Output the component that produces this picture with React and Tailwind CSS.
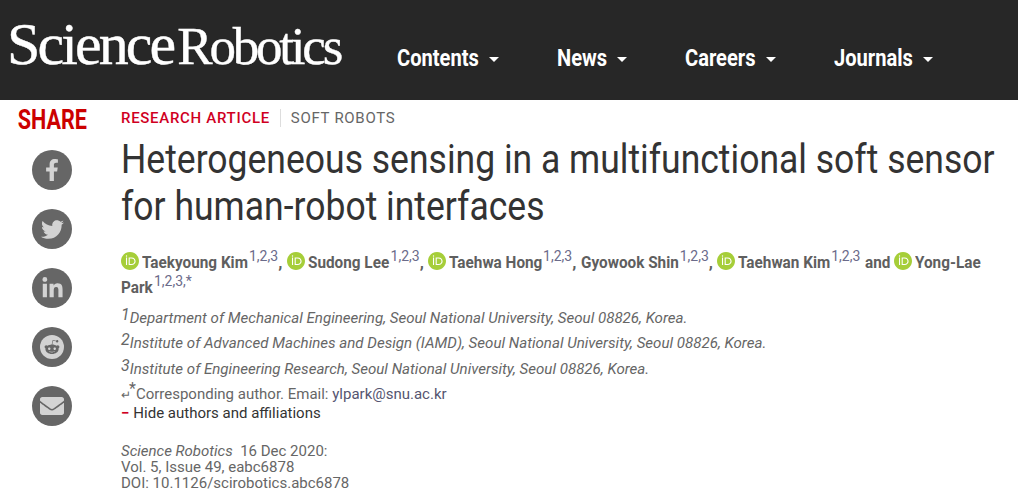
import React from "react";
import { FaFacebookF, FaTwitter, FaLinkedinIn, FaEnvelope, FaRedditAlien } from "react-icons/fa";
import { SiOrcid } from "react-icons/si";

function NavItem({ label, w }) {
  return (
    <div className="flex items-center">
      <span className="inline-block origin-left scale-x-[0.874] whitespace-nowrap text-[23px] font-bold text-white" style={{ width: w }}>{label}</span>
      <span className="h-0 w-0 border-x-[5px] border-t-[5px] border-x-transparent border-t-white" />
    </div>
  );
}

function Share({ children }) {
  return <div className="flex h-[40px] w-[40px] items-center justify-center rounded-full bg-[#666666] text-[#d3d3d3]">{children}</div>;
}

function Orcid() {
  return <SiOrcid className="mr-[3px] inline-block align-[-2px] text-[#a6ce39]" size={18} />;
}

function Sup({ children }) {
  return <sup className="top-[-2px] align-[5px] text-[14px] font-normal leading-[0] text-[#6b6b8a]">{children}</sup>;
}

function Name({ w, children }) {
  return <span className="inline-block origin-left scale-x-[0.9] whitespace-nowrap align-baseline" style={{ width: w }}>{children}</span>;
}

function Mark({ children }) {
  return <sup className="top-0 align-[3px] text-[16px] leading-[0]">{children}</sup>;
}

export default function App() {
  return (
    <div className="h-[503px] w-[1018px] overflow-hidden bg-white font-['Roboto',sans-serif]">
      <header className="flex h-[100px] bg-[#272727]">
        <div className="ml-[7px] flex w-[390px] shrink-0 items-baseline pt-[14px] font-['Liberation_Serif',serif] leading-[60px] text-white [-webkit-text-stroke:0.4px_white]">
          <span className="text-[60px] tracking-[-2.9px]">Science</span>
          <span className="ml-[4px] text-[53px] tracking-[-3.2px]">Robotics</span>
        </div>
        <nav className="flex items-start gap-[58px] pt-[42px]">
          <NavItem label="Contents" w={92} />
          <NavItem label="News" w={60} />
          <NavItem label="Careers" w={81} />
          <NavItem label="Journals" w={89} />
        </nav>
      </header>
      <div className="flex">
        <aside className="flex w-[104px] shrink-0 flex-col items-center">
          <div className="origin-center scale-x-[0.8] pt-[4px] text-[27px] font-bold leading-[32px] text-[#cc0000]">SHARE</div>
          <div className="mt-[14px] flex flex-col gap-[19px]">
            <Share><FaFacebookF size={22} /></Share>
            <Share><FaTwitter size={23} /></Share>
            <Share><FaLinkedinIn size={23} /></Share>
            <Share>
              <span className="flex h-[24px] w-[24px] items-center justify-center rounded-full bg-[#d3d3d3] text-[#666666]"><FaRedditAlien size={16} /></span>
            </Share>
            <Share><FaEnvelope size={24} /></Share>
          </div>
        </aside>
        <main className="ml-[17px] min-w-0 flex-1">
          <div className="flex items-center pt-[9px] text-[15px] leading-[18px] tracking-[0.7px]">
            <span className="font-medium text-[#d0001f]">RESEARCH ARTICLE</span>
            <span className="mx-[10px] h-[18px] w-px bg-[#dddddd]" />
            <span className="text-[#666666]">SOFT ROBOTS</span>
          </div>
          <h1 className="mt-[9px] w-[1050px] origin-left scale-x-[0.888] text-[40px] font-normal leading-[47px] text-[#333333]">
            Heterogeneous sensing in a multifunctional soft sensor<br />for human-robot interfaces
          </h1>
          <div className="mt-[20px] w-[880px] text-[17px] font-bold leading-[25px] text-[#5f5f5f]">
            <Orcid /><Name w={107}>Taekyoung Kim</Name><Sup>1,2,3</Sup>, <Orcid /><Name w={83}>Sudong Lee</Name><Sup>1,2,3</Sup>, <Orcid /><Name w={94}>Taehwa Hong</Name><Sup>1,2,3</Sup>, <Name w={99}>Gyowook Shin</Name><Sup>1,2,3</Sup>, <Orcid /><Name w={93}>Taehwan Kim</Name><Sup>1,2,3</Sup> <Name w={25}>and</Name> <Orcid /><Name w={66}>Yong-Lae</Name>
            <br /><Name w={33}>Park</Name><Sup>1,2,3,*</Sup>
          </div>
          <div className="mt-[5.5px] text-[15.1px] italic leading-[25.5px] text-[#666666]">
            <div><Mark>1</Mark>Department of Mechanical Engineering, Seoul National University, Seoul 08826, Korea.</div>
            <div><Mark>2</Mark>Institute of Advanced Machines and Design (IAMD), Seoul National University, Seoul 08826, Korea.</div>
            <div><Mark>3</Mark>Institute of Engineering Research, Seoul National University, Seoul 08826, Korea.</div>
          </div>
          <div className="mt-[2.5px] text-[15px] leading-[18px] text-[#666666]">
            <div><span className="text-[12px]">↵</span><sup className="top-0 -ml-[2px] align-[5px] text-[16px] leading-[0]">*</sup>Corresponding author. Email: <span className="text-[#555570]">ylpark@snu.ac.kr</span></div>
            <div className="text-[#333333]"><span className="mr-[4px] font-bold text-[#d0001f]">−</span>Hide authors and affiliations</div>
          </div>
          <div className="mt-[21px] text-[15px] leading-[16px] text-[#666666]">
            <div><i>Science Robotics</i>&nbsp; 16 Dec 2020:</div>
            <div>Vol. 5, Issue 49, eabc6878</div>
            <div>DOI: 10.1126/scirobotics.abc6878</div>
          </div>
        </main>
      </div>
    </div>
  );
}
